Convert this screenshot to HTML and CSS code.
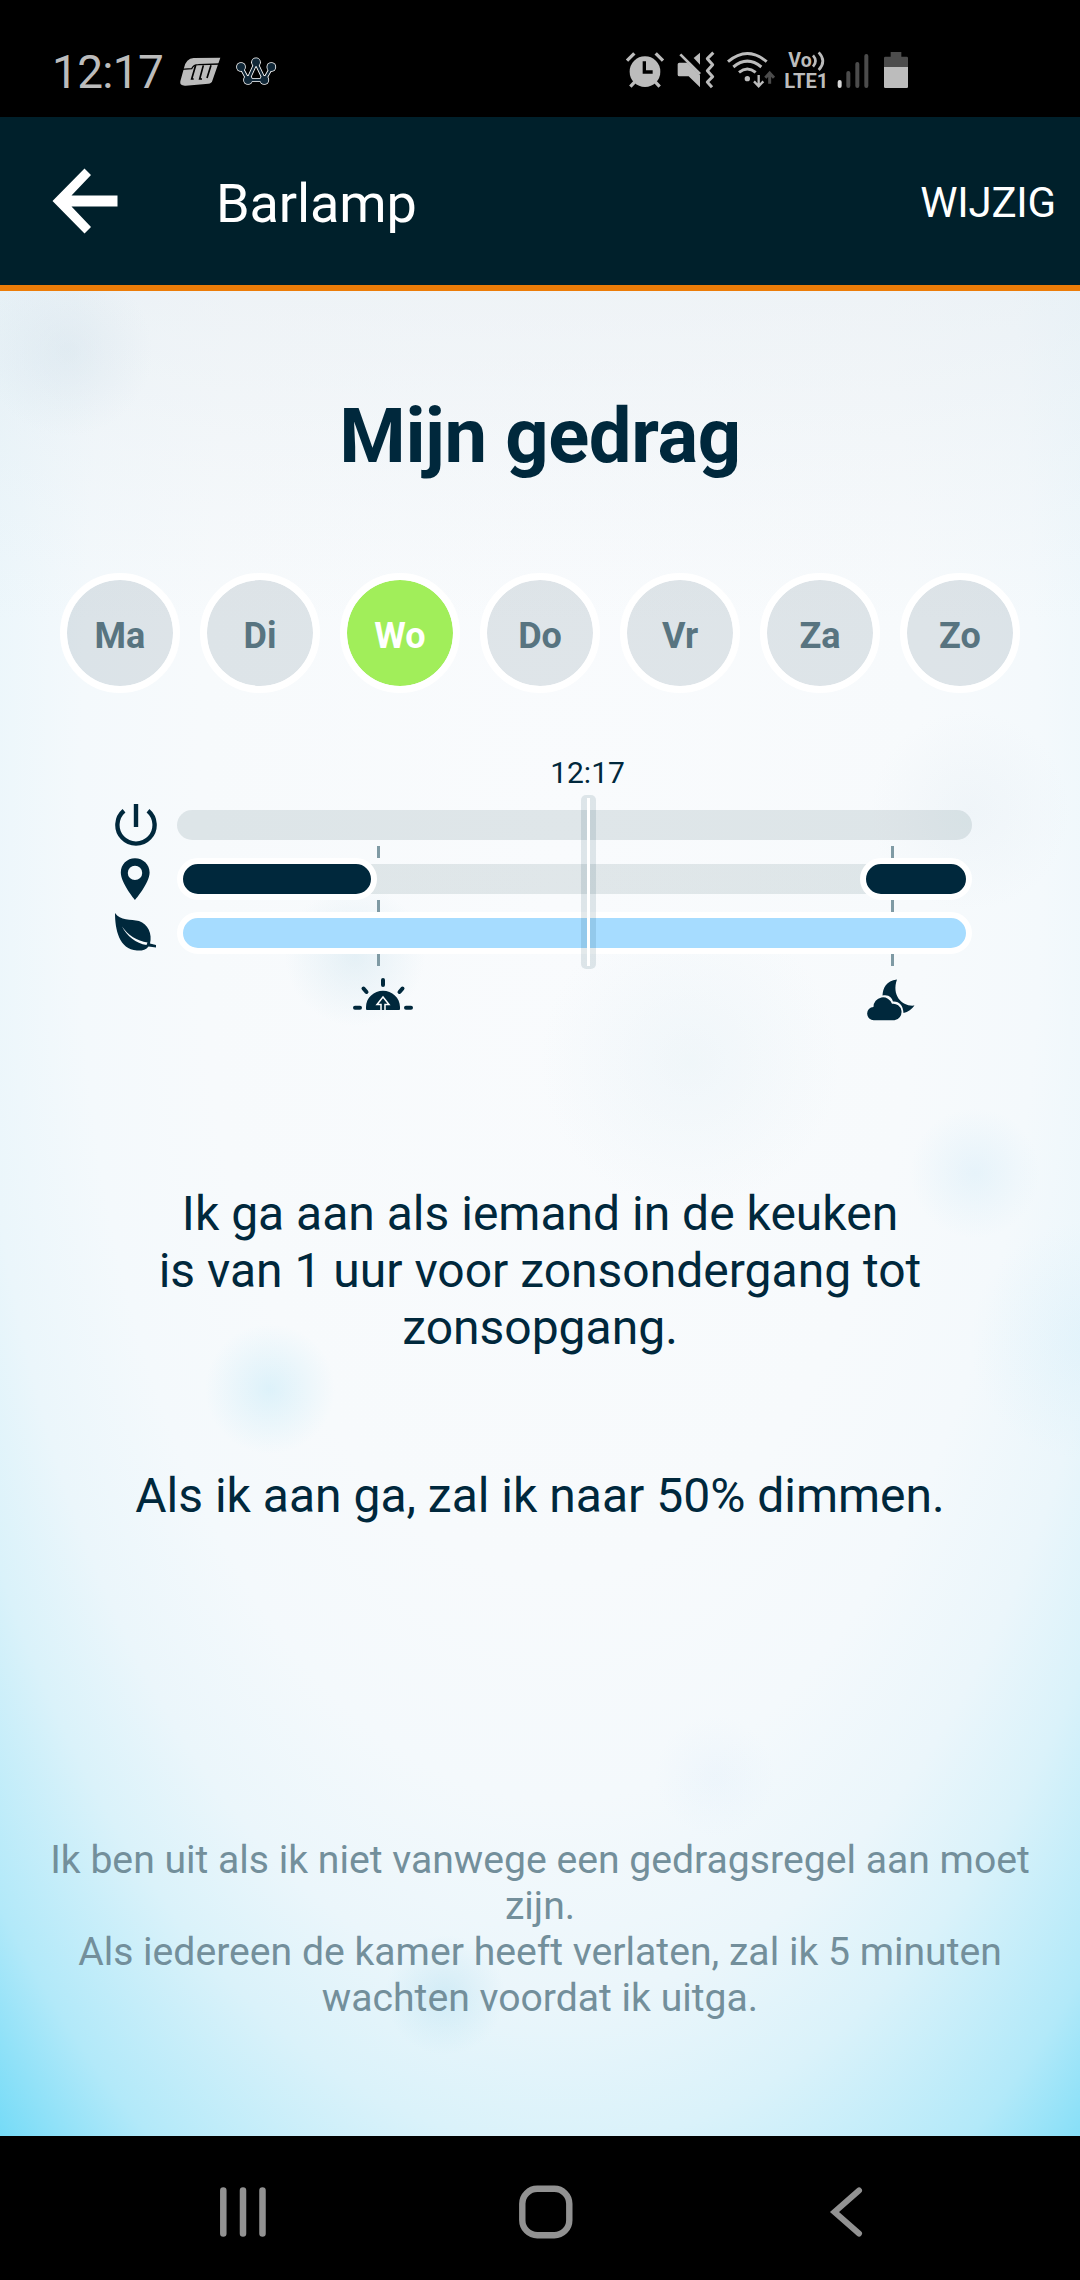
FILE: index.html
```html
<!DOCTYPE html>
<html lang="nl">
<head>
<meta charset="utf-8">
<title>Barlamp</title>
<link rel="stylesheet" href="styles.css">
</head>
<body>
<div class="screen">
  <div class="status-bar">
    <div class="status-left">
      <span class="clock">12:17</span>
      <svg class="notif-icon" viewBox="536 100 126 104" aria-hidden="true">
        <path fill="#bcbcbc" d="M580 112L660 111L636 180Q634 188 624 189L556 195Q537 196 540 182L551 142Q557 113 580 112Z"/>
        <path fill="none" stroke="#000" stroke-width="4" d="M542 146L574 144Q580 132 594 132L658 130"/>
        <path fill="none" stroke="#000" stroke-width="5" d="M586 134L574 175H580M609 134L598 175H605M632 134L620 172"/>
      </svg>
      <svg class="notif-icon crown" viewBox="705 100 126 104" aria-hidden="true">
        <g fill="#fff" stroke="#fff" stroke-width="12">
          <path fill="none" d="M723 139L744 178L768 125L793 178L815 139M744 178H793"/>
          <g stroke="none"><circle cx="723" cy="139" r="14.500"/><circle cx="768" cy="125" r="14.500"/><circle cx="814" cy="139" r="14.500"/><circle cx="744" cy="178" r="14.500"/><circle cx="793" cy="178" r="14.500"/></g>
        </g>
        <g fill="#102737" stroke="#102737" stroke-width="7">
          <path fill="none" d="M723 139L744 178L768 125L793 178L815 139M744 178H793"/>
          <g stroke="none"><circle cx="723" cy="139" r="12"/><circle cx="768" cy="125" r="12"/><circle cx="814" cy="139" r="12"/><circle cx="744" cy="178" r="12"/><circle cx="793" cy="178" r="12"/></g>
        </g>
      </svg>
    </div>
    <svg class="status-icons" viewBox="60 0 900 270" aria-hidden="true">
      <g fill="none" stroke="#bcbcbc" stroke-width="10">
        <circle cx="135" cy="125" r="46" fill="#bcbcbc" stroke="none"/>
        <path d="M81 92L103 70M167 70L189 92"/>
        <path d="M91 170L105 155M179 170L165 155"/>
        <path stroke="#000" d="M133 94V126H158"/>
      </g>
      <g fill="#bcbcbc">
        <path d="M238 98H262L300 136V172L266 139H238Q233 139 233 134V103Q233 98 238 98Z"/>
        <path d="M281 84L300 68V104Z"/>
        <path fill="none" stroke="#bcbcbc" stroke-width="8" d="M241 73L300 132"/>
        <path fill="none" stroke="#bcbcbc" stroke-width="9" stroke-linejoin="round" d="M340 68L322 86L338 104L322 122L338 140L322 156L336 172"/>
      </g>
      <g fill="none" stroke="#bcbcbc" stroke-width="9">
        <path d="M384 95Q442 46 500 95"/>
        <path d="M400 111Q442 76 484 111"/>
        <path d="M417 127Q442 107 467 127"/>
        <circle cx="442" cy="146" r="8" fill="#bcbcbc" stroke="none"/>
        <path stroke-width="7" d="M476 135V167M462 154L476 169L490 154"/>
        <path stroke="#4c4c4c" stroke-width="9" d="M509 161V132M496 143L509 129L522 143"/>
      </g>
      <g fill="#bcbcbc">
        <text class="volte" x="565" y="110" textLength="70" lengthAdjust="spacingAndGlyphs">Vo</text>
        <text class="volte" x="553" y="173" textLength="132" lengthAdjust="spacingAndGlyphs">LTE1</text>
        <path fill="none" stroke="#bcbcbc" stroke-width="8" d="M639 76Q654 93 639 110M656 67Q681 93 656 120"/>
      </g>
      <g stroke-width="12" stroke-linecap="round" stroke="#4c4c4c">
        <path stroke="#d8d8d8" d="M719 156V168"/>
        <path d="M745 129V168M772 102V168M799 78V168"/>
      </g>
      <path fill="#4c4c4c" d="M872 66H904V80H920Q924 80 924 84V111H852V84Q852 80 856 80H872Z"/>
      <path fill="#bcbcbc" d="M852 111H924V170Q924 174 920 174H856Q852 174 852 170Z"/>
    </svg>
  </div>

  <header class="app-bar">
    <svg class="back" viewBox="0 0 66 66" aria-hidden="true"><path fill="#fff" d="M32.500 .5L39 7L19.500 27.500H65.500V38.500H19.500L39 59L32.500 65.500L.5 33Z"/></svg>
    <h1 class="app-title">Barlamp</h1>
    <span class="edit">WIJZIG</span>
  </header>

  <main class="content">
    <h2 class="heading">Mijn gedrag</h2>

    <div class="days">
      <span class="day">Ma</span>
      <span class="day">Di</span>
      <span class="day day-active">Wo</span>
      <span class="day">Do</span>
      <span class="day">Vr</span>
      <span class="day">Za</span>
      <span class="day">Zo</span>
    </div>

    <div class="now-label">12:17</div>
    <div class="schedule">
      <div class="row-icons">
        <svg viewBox="0 0 42 42"><path fill="none" stroke="#00283c" stroke-width="4.400" d="M9 6.800A18.600 18.600 0 1 0 33 6.800M21 0V23"/></svg>
        <svg viewBox="0 0 42 42"><path fill="#00283c" fill-rule="evenodd" d="M20 .3C12 .3 5.800 6.500 5.800 14.500C5.800 25 20 42 20 42S34.600 25 34.600 14.500C34.600 6.500 28 .3 20 .3ZM20 7.700A7.200 7.200 0 1 1 20 22.100A7.200 7.200 0 1 1 20 7.700Z"/></svg>
        <svg viewBox="0 0 42 42"><path fill="#00283c" d="M0 1C5 9 16 7 24 9C33 12 37.500 22 35 31.500L41 33V35.500L33.500 34.500C31 38 26 39 22 38.500C4 37.500 0 17 0 1Z"/><path fill="#f8fbfd" d="M7 14.500C13 23 22 29 32.500 30.500L31.500 33C21 31.500 12 24 7 14.500Z"/></svg>
      </div>
      <div class="tracks">
        <div class="track"></div>
        <div class="track split">
          <div class="period"></div>
          <div class="period period-late"></div>
        </div>
        <div class="track track-eco"></div>
        <div class="sun-marks mark-rise"><i></i><i></i><i></i></div>
        <div class="sun-marks mark-set"><i></i><i></i><i></i></div>
        <div class="now-line"></div>
      </div>
    </div>
    <div class="sun-icons">
      <svg class="sunrise" viewBox="0 0 60 32">
        <path fill="none" stroke="#00283c" stroke-width="4" stroke-linecap="round" d="M30 2V7M10.500 10.500L13.500 14M49.500 10.500L46.500 14M2 29.800H7M53 29.800H58"/>
        <path fill="#00283c" d="M13 32V29C13 20 21 12.800 30 12.800S47 20 47 29V31Q47 32 46 32H14Q13 32 13 31Z"/>
        <path fill="#00283c" stroke="#fff" stroke-width="1.500" d="M28 32V26.500H24L30 19L36 26.500H32V32"/>
      </svg>
      <svg class="sunset" viewBox="0 0 48 42">
        <path fill="#00283c" d="M30 .5C19 2 16 9 15.500 16.500C22 15 25 19 26 22.500C32 22 36 26 36.500 34C41 33 45 30 47.500 26.500C36 28 24 17 30 .5Z"/>
        <path fill="#00283c" stroke="#f8fbfd" stroke-width="2" paint-order="stroke" d="M7 41.200A6.500 6.500 0 0 1 6.500 28A9.500 9.500 0 0 1 25 24.800A8.200 8.200 0 1 1 27.500 41.200Z"/>
      </svg>
    </div>

    <p class="rule">Ik ga aan als iemand in de keuken<br>is van 1 uur voor zonsondergang tot<br>zonsopgang.</p>
    <p class="rule rule-dim">Als ik aan ga, zal ik naar 50% dimmen.</p>

    <p class="note">Ik ben uit als ik niet vanwege een gedragsregel aan moet<br>zijn.<br>Als iedereen de kamer heeft verlaten, zal ik 5 minuten<br>wachten voordat ik uitga.</p>
  </main>

  <nav class="nav-bar">
    <svg viewBox="0 0 60 60"><path stroke="#929292" stroke-width="6.500" stroke-linecap="round" d="M10.300 8.500V51.500M30 8.500V51.500M49.500 8.500V51.500"/></svg>
    <svg viewBox="0 0 60 60"><rect x="6.300" y="6.800" width="47" height="46.400" rx="15" fill="none" stroke="#929292" stroke-width="6.400"/></svg>
    <svg viewBox="0 0 60 60"><path fill="none" stroke="#929292" stroke-width="6" stroke-linecap="round" d="M41 8.500L16.500 30L41 51.500"/></svg>
  </nav>
</div>
</body>
</html>
```
FILE: styles.css
```css
* { box-sizing: border-box; }

body {
  margin: 0;
  background: #000;
  font-family: Roboto, "Noto Sans", sans-serif;
  color: #00283c;
}

.screen {
  display: flex;
  flex-direction: column;
  width: 1080px;
  height: 2280px;
}

.status-bar {
  display: flex;
  align-items: flex-start;
  justify-content: space-between;
  height: 117px;
  padding: 27px 160px 0 52px;
  background: #000;
}

.status-left {
  display: flex;
  align-items: center;
  height: 88px;
}

.clock {
  width: 127px;
  padding-top: 1px;
  font-size: 46px;
  line-height: 60px;
  color: #bcbcbc;
  letter-spacing: -0.7px;
}

.notif-icon {
  width: 42px;
  height: 34.700px;
}

.crown { margin-left: 14px; }

.status-icons {
  width: 300px;
  height: 90px;
  margin-top: 3px;
}

.volte {
  font-size: 62px;
  font-weight: 700;
}

.app-bar {
  display: flex;
  align-items: center;
  height: 174px;
  padding: 0 24px 0 52px;
  background: #00202b;
  border-bottom: 6px solid #ec7c08;
}

.back {
  width: 66px;
  height: 66px;
}

.app-title {
  margin: 5px 0 0 98px;
  font-size: 54px;
  line-height: 64px;
  font-weight: 400;
  letter-spacing: -0.1px;
  color: #fff;
}

.edit {
  margin: 4px 0 0 auto;
  font-size: 42px;
  line-height: 50px;
  letter-spacing: -0.2px;
  color: #fff;
}

.content {
  display: flex;
  flex-direction: column;
  height: 1845px;
  padding: 100px 45px 0;
  text-align: center;
  background:
    radial-gradient(circle 85px at 68px 60px, rgba(200, 218, 230, .3), transparent),
    radial-gradient(circle 70px at 355px 665px, rgba(200, 225, 236, .4), transparent),
    radial-gradient(circle 65px at 270px 1098px, rgba(180, 228, 246, .38), transparent),
    radial-gradient(circle 65px at 975px 882px, rgba(200, 230, 246, .32), transparent),
    radial-gradient(circle 60px at 445px 1704px, rgba(160, 215, 236, .32), transparent),
    radial-gradient(circle 120px at 1090px 1050px, rgba(190, 230, 248, .22), transparent),
    radial-gradient(circle 150px at 690px 770px, rgba(225, 238, 244, .35), transparent),
    radial-gradient(circle 60px at 715px 1485px, rgba(220, 235, 250, .25), transparent),
    radial-gradient(circle 100px at 970px 520px, rgba(210, 224, 234, .18), transparent),
    linear-gradient(rgba(222, 230, 236, .36), transparent 330px),
    radial-gradient(ellipse 800px 3000px at 560px 609px, #f9fbfd 0, #f7fafc 45%, #f4f9fc 60%, #ebf6fb 73%, #daf2fa 83%) top / 100% 609px no-repeat,
    radial-gradient(ellipse 800px 1500px at 560px 0, #f9fbfd 0, #f7fafc 45%, #f4f9fc 60%, #ebf6fb 73%, #daf2fa 83%, #b2e9f9 97%, #70daf7 109%) bottom / 100% 1236px no-repeat;
}

.heading {
  margin: 0;
  font-size: 76px;
  line-height: 90px;
  font-weight: 700;
  letter-spacing: -0.400px;
}

.days {
  display: flex;
  gap: 20px;
  margin: 92px 15px 0;
}

.day {
  width: 120px;
  height: 120px;
  padding-top: 3px;
  border: 7px solid #fff;
  border-radius: 50%;
  background: rgba(0, 40, 60, .1) padding-box;
  font-size: 36px;
  line-height: 106px;
  font-weight: 700;
  color: #587480;
}

.day-active {
  background-color: #a1ee5a;
  color: #fff;
}

.now-label {
  margin: 62px 0 7px 95px;
  font-size: 30px;
  line-height: 36px;
}

.schedule {
  display: flex;
  gap: 20px;
  margin-left: 70px;
}

.row-icons {
  display: flex;
  flex-direction: column;
  gap: 12px;
  width: 42px;
  padding-top: 6px;
}

.row-icons svg {
  width: 42px;
  height: 42px;
}

.tracks {
  position: relative;
  display: flex;
  flex-direction: column;
  gap: 24px;
  width: 795px;
  padding: 12px 0;
}

.track {
  height: 30px;
  border-radius: 15px;
  background: rgba(0, 52, 60, .1);
}

.split {
  display: flex;
  align-items: center;
  justify-content: space-between;
  background: linear-gradient(rgba(0, 52, 60, .1), rgba(0, 52, 60, .1)) 185px 0 / 507px 30px no-repeat;
}

.period {
  width: 200px;
  height: 42px;
  border: 6px solid #fff;
  border-radius: 21px;
  background: #00283c;
}

.period-late { width: 112px; }

.track-eco {
  height: 42px;
  margin: -6px 0;
  border: 6px solid #fff;
  border-radius: 21px;
  background: #a6dcff;
}

.sun-marks {
  position: absolute;
  top: 48px;
  display: flex;
  flex-direction: column;
  gap: 42px;
}

.sun-marks i {
  width: 3px;
  height: 12px;
  background: #7f9aa4;
}

.mark-rise { left: 200px; }
.mark-set { left: 714px; }

.now-line {
  position: absolute;
  top: -3px;
  left: 404px;
  width: 15px;
  height: 174px;
  border-radius: 5px;
  background: linear-gradient(#fff, #fff) center / 3px 168px no-repeat, rgba(0, 52, 70, .11);
}

.sun-icons {
  display: flex;
  justify-content: space-between;
  margin: 18px 120px 0 308px;
}

.sunrise {
  width: 60px;
  height: 32px;
}

.sunset {
  width: 48px;
  height: 42px;
  margin-top: 1px;
}

.rule {
  margin: 164px 0 0;
  font-size: 48px;
  line-height: 57px;
}

.rule-dim { margin-top: 111px; }

.note {
  margin: 313px -20px 0;
  font-size: 39.150px;
  line-height: 46px;
  color: #738f9b;
}

.nav-bar {
  display: flex;
  align-items: center;
  justify-content: space-between;
  height: 144px;
  padding: 7px 202px 0 213px;
  background: #000;
}

.nav-bar svg {
  width: 60px;
  height: 60px;
}
```
